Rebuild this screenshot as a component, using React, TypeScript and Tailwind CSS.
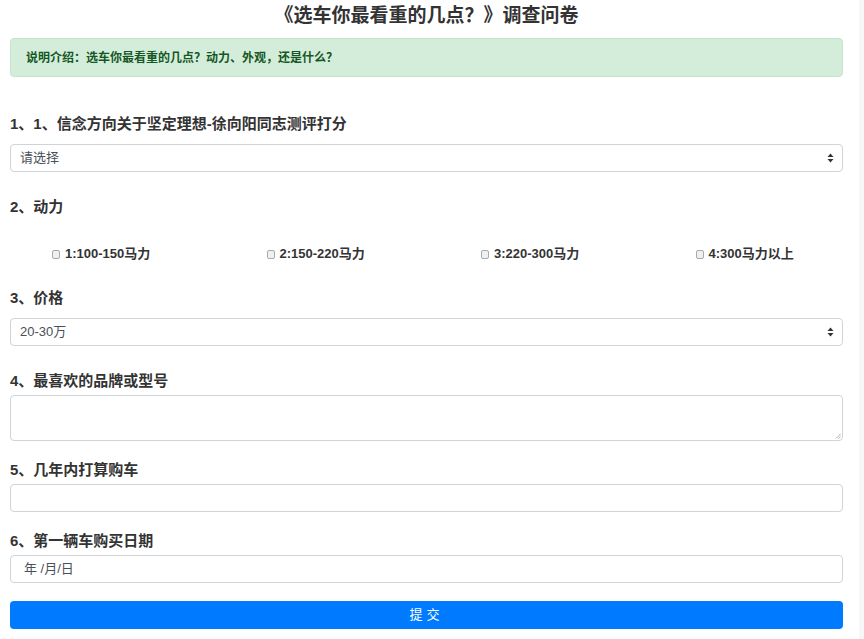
import React from "react";

const FONT = { fontFamily: '"Liberation Sans", "Noto Sans CJK SC", sans-serif' };

/* tiny up/down caret like the browser's select arrow */
function Caret() {
  return (
    <svg className="absolute right-[8px] top-1/2 -translate-y-1/2" width="7" height="10" viewBox="0 0 7 10">
      <path d="M3.5 0.5 L6.5 4 L0.5 4 Z" fill="#333" />
      <path d="M3.5 9.5 L6.5 6 L0.5 6 Z" fill="#333" />
    </svg>
  );
}

function Label({ children, className = "" }: { children: React.ReactNode; className?: string }) {
  return <div className={"text-[15px] font-bold leading-[24px] text-[#333] " + className}>{children}</div>;
}

function SelectBox({ value }: { value: string }) {
  return (
    <div className="relative h-[28px] rounded-[4px] border border-[#ced4da] bg-white flex items-center pl-[9px] text-[13px] text-[#495057]">
      {value}
      <Caret />
    </div>
  );
}

const OPTIONS = ["1:100-150马力", "2:150-220马力", "3:220-300马力", "4:300马力以上"];

export default function App() {
  return (
    <div className="flex min-h-[639px] bg-white" style={FONT}>
      <main className="flex-1 min-w-0 pl-[10px] pr-[16px]">
        <h1 className="h-[32px] flex items-center justify-center text-[19px] font-bold text-[#333]">
          《选车你最看重的几点？》调查问卷
        </h1>

        <div className="mt-[6px] h-[39px] rounded-[4px] border border-[#c3e6cb] bg-[#d4edda] flex items-center pl-[15px] text-[12px] font-bold text-[#155724]">
          说明介绍：选车你最看重的几点？动力、外观，还是什么？
        </div>

        <Label className="mt-[35px]">1、1、信念方向关于坚定理想-徐向阳同志测评打分</Label>
        <div className="mt-[8px]">
          <SelectBox value="请选择" />
        </div>

        <Label className="mt-[23px]">2、动力</Label>
        <div className="mt-[25px] h-[20px] flex items-center overflow-hidden">
          {OPTIONS.map((o) => (
            <label key={o} className="w-[214.5px] shrink-0 pl-[42px] flex items-center gap-[5px] text-[13px] font-bold text-[#333]">
              <span className="w-[8px] h-[9px] rounded-[2px] border border-[#a9a9a9] bg-[#f0f0f0]" />
              {o}
            </label>
          ))}
        </div>

        <Label className="mt-[22px]">3、价格</Label>
        <div className="mt-[8px]">
          <SelectBox value="20-30万" />
        </div>

        <Label className="mt-[23px]">4、最喜欢的品牌或型号</Label>
        <div className="mt-[2px] relative h-[46px] rounded-[4px] border border-[#ced4da] bg-white">
          <svg className="absolute right-[1px] bottom-[1px]" width="6" height="6" viewBox="0 0 6 6">
            <path d="M5.5 1 L1 5.5 M5.5 3.5 L3.5 5.5" stroke="#999" strokeWidth="0.8" />
          </svg>
        </div>

        <Label className="mt-[17px]">5、几年内打算购车</Label>
        <div className="mt-[2px] h-[28px] rounded-[4px] border border-[#ced4da] bg-white" />

        <Label className="mt-[17px]">6、第一辆车购买日期</Label>
        <div className="mt-[2px] h-[28px] rounded-[4px] border border-[#ced4da] bg-white flex items-center pl-[13px] text-[13px] text-[#495057]">
          年 /月/日
        </div>

        <button className="mt-[18px] w-full h-[28px] rounded-[4px] bg-[#007bff] text-white text-[13px] tracking-[4px] flex items-center justify-center">
          提交
        </button>
      </main>
      <div className="w-[5px] bg-[#f7f7f7]" />
    </div>
  );
}
